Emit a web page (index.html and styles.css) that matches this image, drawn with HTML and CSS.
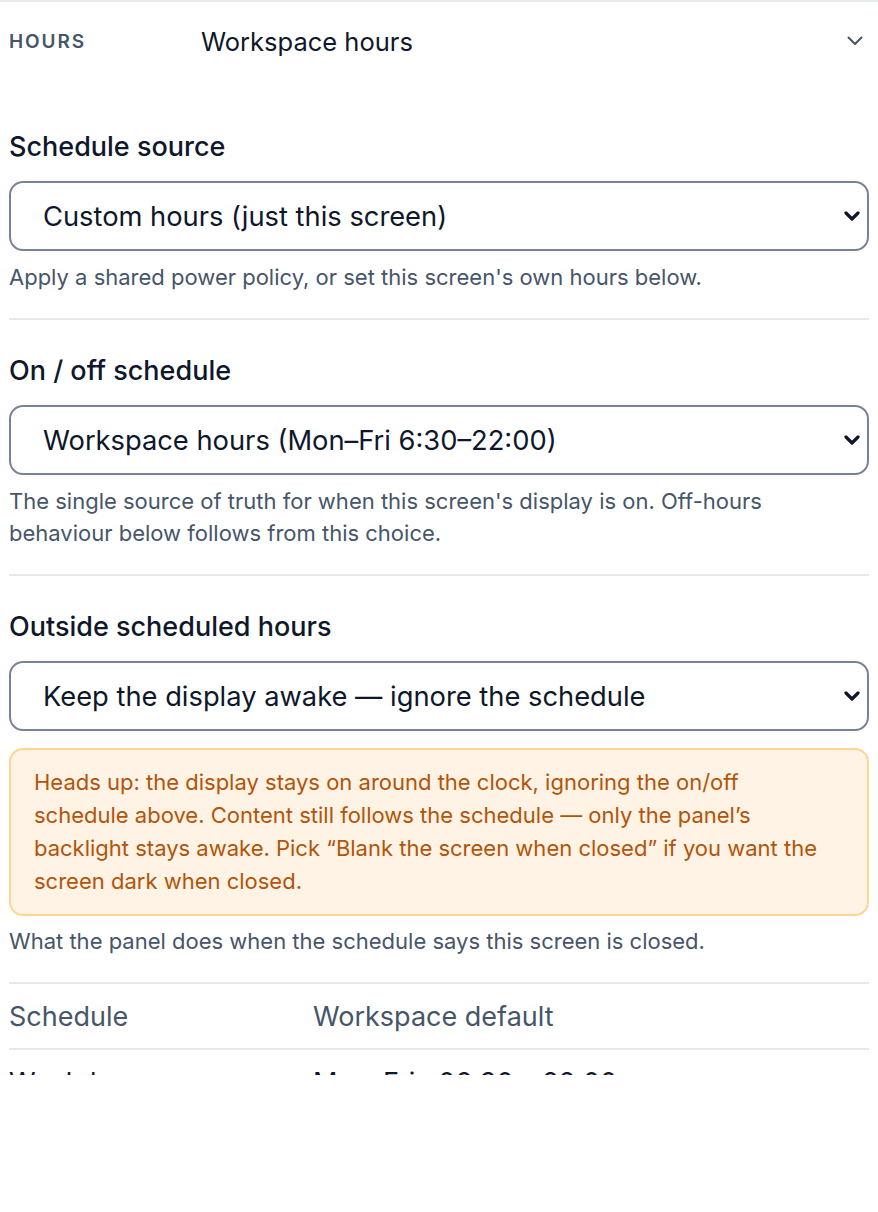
FILE: index.html
```html
<!DOCTYPE html>
<html lang="en">
<head>
<meta charset="utf-8">
<title>Hours</title>
<link rel="stylesheet" href="styles.css">
</head>
<body>
<div class="panel">
  <div class="head">
    <span class="head-key">HOURS</span>
    <span class="head-value">Workspace hours</span>
    <svg class="head-chev" width="16" height="10" viewBox="0 0 16 10"><path d="M1.5 1.5 L8 8 L14.5 1.5" fill="none" stroke="#475569" stroke-width="2" stroke-linecap="round" stroke-linejoin="round"/></svg>
  </div>

  <div class="section first">
    <div class="label">Schedule source</div>
    <div class="select-wrap">
      <select class="select"><option>Custom hours (just this screen)</option></select>
      <svg class="sel-chev" width="16" height="11" viewBox="0 0 16 11"><path d="M2 2 L8 8 L14 2" fill="none" stroke="#0f172a" stroke-width="3.2" stroke-linecap="round" stroke-linejoin="round"/></svg>
    </div>
    <p class="help">Apply a shared power policy, or set this screen's own hours below.</p>
  </div>

  <div class="section">
    <div class="label">On / off schedule</div>
    <div class="select-wrap">
      <select class="select"><option>Workspace hours (Mon–Fri 6:30–22:00)</option></select>
      <svg class="sel-chev" width="16" height="11" viewBox="0 0 16 11"><path d="M2 2 L8 8 L14 2" fill="none" stroke="#0f172a" stroke-width="3.2" stroke-linecap="round" stroke-linejoin="round"/></svg>
    </div>
    <p class="help">The single source of truth for when this screen's display is on. Off-hours behaviour below follows from this choice.</p>
  </div>

  <div class="section">
    <div class="label">Outside scheduled hours</div>
    <div class="select-wrap">
      <select class="select"><option>Keep the display awake — ignore the schedule</option></select>
      <svg class="sel-chev" width="16" height="11" viewBox="0 0 16 11"><path d="M2 2 L8 8 L14 2" fill="none" stroke="#0f172a" stroke-width="3.2" stroke-linecap="round" stroke-linejoin="round"/></svg>
    </div>
    <div class="warn">Heads up: the display stays on around the clock, ignoring the on/off schedule above. Content still follows the schedule — only the panel’s backlight stays awake. Pick “Blank the screen when closed” if you want the screen dark when closed.</div>
    <p class="help">What the panel does when the schedule says this screen is closed.</p>
  </div>

  <table class="kv">
    <tr><td class="k">Schedule</td><td class="v">Workspace default</td></tr>
    <tr><td class="k dark">Weekdays</td><td class="v dark">Mon–Fri · 06:30 – 22:00</td></tr>
  </table>
</div>
</body>
</html>
```
FILE: styles.css
```css
html, body {
  margin: 0;
  padding: 0;
  background: #ffffff;
}
body {
  font-family: Inter, "Noto Sans", sans-serif;
  color: #0f172a;
}
.panel {
  height: 1075px;
  overflow: hidden;
  border-top: 2px solid #e8ebef;
  padding: 0 9px;
  box-sizing: border-box;
}
.head {
  height: 78px;
  display: flex;
  align-items: center;
}
.head-key {
  width: 192px;
  font-size: 19px;
  font-weight: 600;
  letter-spacing: 1.9px;
  color: #475569;
}
.head-value {
  flex: 1;
  font-size: 25.5px;
  color: #0f172a;
}
.head-chev {
  margin-right: 6px;
}
.section {
  padding: 35px 0 25px;
  border-bottom: 2px solid #e6e8ec;
}
.section.first {
  padding-top: 51px;
}
.label {
  font-size: 27px;
  line-height: 32px;
  font-weight: 500;
  color: #0f172a;
  margin-bottom: 18px;
}
.select-wrap {
  position: relative;
}
.select {
  display: block;
  width: 100%;
  height: 70px;
  box-sizing: border-box;
  appearance: none;
  -webkit-appearance: none;
  background: #ffffff;
  border: 2px solid #77839a;
  border-radius: 14px;
  padding: 0 60px 0 32px;
  font-family: Inter, "Noto Sans", sans-serif;
  font-size: 27.3px;
  color: #0f172a;
  outline: none;
}
.sel-chev {
  position: absolute;
  right: 9px;
  top: 30px;
  pointer-events: none;
}
.help {
  margin: 10px 0 0;
  font-size: 22px;
  line-height: 32px;
  color: #475569;
}
.warn {
  margin-top: 17px;
  background: #fef3e4;
  border: 2px solid #fcd592;
  border-radius: 14px;
  padding: 16px 38px 16px 23px;
  font-size: 22px;
  line-height: 33px;
  color: #b45309;
}
.warn + .help {
  margin-top: 9px;
}
.kv {
  width: 100%;
  border-collapse: collapse;
}
.kv td {
  height: 64px;
  padding: 0;
  border-bottom: 2px solid #e6e8ec;
  font-size: 27px;
  color: #475569;
  vertical-align: middle;
}
.kv td.k {
  width: 304px;
}
.kv td.dark {
  color: #0f172a;
}
```
